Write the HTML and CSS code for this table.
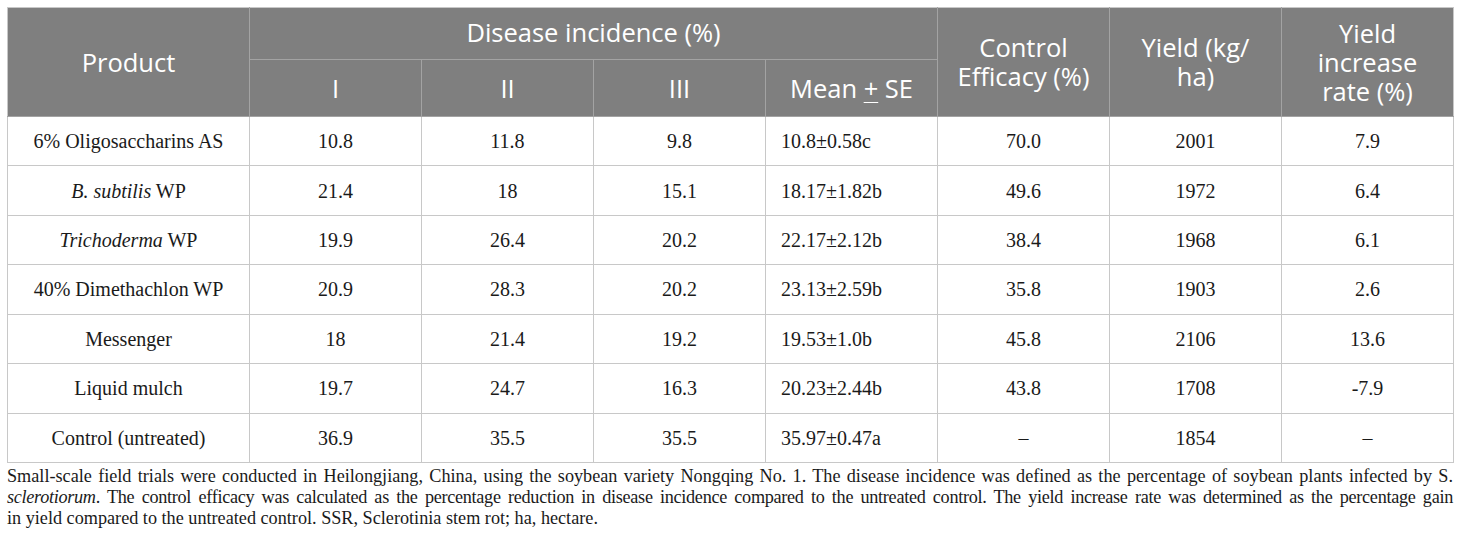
FILE: index.html
```html
<!DOCTYPE html>
<html lang="en">
<head>
<meta charset="utf-8">
<title>Table</title>
<link rel="stylesheet" href="styles.css">
</head>
<body>
<div class="wrap">
<table class="data">
  <colgroup>
    <col class="c-prod">
    <col class="c-num"><col class="c-num"><col class="c-num"><col class="c-num">
    <col class="c-num"><col class="c-num"><col class="c-num">
  </colgroup>
  <thead>
    <tr class="h1">
      <th rowspan="2">Product</th>
      <th colspan="4">Disease incidence (%)</th>
      <th rowspan="2">Control<br>Efficacy (%)</th>
      <th rowspan="2">Yield (kg/<br>ha)</th>
      <th rowspan="2">Yield<br>increase<br>rate (%)</th>
    </tr>
    <tr class="h2">
      <th>I</th>
      <th>II</th>
      <th>III</th>
      <th>Mean <u class="pm">+</u> SE</th>
    </tr>
  </thead>
  <tbody>
    <tr><td>6% Oligosaccharins AS</td><td>10.8</td><td>11.8</td><td>9.8</td><td class="mean">10.8±0.58c</td><td>70.0</td><td>2001</td><td>7.9</td></tr>
    <tr><td><i>B. subtilis</i> WP</td><td>21.4</td><td>18</td><td>15.1</td><td class="mean">18.17±1.82b</td><td>49.6</td><td>1972</td><td>6.4</td></tr>
    <tr><td><i>Trichoderma</i> WP</td><td>19.9</td><td>26.4</td><td>20.2</td><td class="mean">22.17±2.12b</td><td>38.4</td><td>1968</td><td>6.1</td></tr>
    <tr><td>40% Dimethachlon WP</td><td>20.9</td><td>28.3</td><td>20.2</td><td class="mean">23.13±2.59b</td><td>35.8</td><td>1903</td><td>2.6</td></tr>
    <tr><td>Messenger</td><td>18</td><td>21.4</td><td>19.2</td><td class="mean">19.53±1.0b</td><td>45.8</td><td>2106</td><td>13.6</td></tr>
    <tr><td>Liquid mulch</td><td>19.7</td><td>24.7</td><td>16.3</td><td class="mean">20.23±2.44b</td><td>43.8</td><td>1708</td><td>-7.9</td></tr>
    <tr><td>Control (untreated)</td><td>36.9</td><td>35.5</td><td>35.5</td><td class="mean">35.97±0.47a</td><td>–</td><td>1854</td><td>–</td></tr>
  </tbody>
</table>
<p class="note">
  <span class="line just">Small-scale field trials were conducted in Heilongjiang, China, using the soybean variety Nongqing No. 1. The disease incidence was defined as the percentage of soybean plants infected by S.</span>
  <span class="line just tight"><i>sclerotiorum</i>. The control efficacy was calculated as the percentage reduction in disease incidence compared to the untreated control. The yield increase rate was determined as the percentage gain</span>
  <span class="line">in yield compared to the untreated control. SSR, Sclerotinia stem rot; ha, hectare.</span>
</p>
</div>
</body>
</html>
```

FILE: styles.css
```css
html, body {
  margin: 0;
  padding: 0;
  background: #ffffff;
}

.wrap {
  padding: 7px 0 0 7px;
  width: 1446px;
}

.data {
  width: 1446px;
  table-layout: fixed;
  border-collapse: collapse;
  font-family: "Liberation Serif", "Times New Roman", serif;
  font-size: 20px;
  color: #1a1a1a;
}

.c-prod { width: 242px; }
.c-num { width: 172px; }

.data th {
  background: #7f7f7f;
  color: #ffffff;
  font-family: "Open Sans", "Noto Sans", sans-serif;
  font-weight: 400;
  font-size: 25.5px;
  line-height: 29px;
  text-align: center;
  vertical-align: middle;
  padding: 0 8px;
  border: 1px solid #a3a3a3;
}

.data thead tr:first-child th {
  border-top-color: #c8c8c8;
}
.data thead th:first-child {
  border-left-color: #c8c8c8;
}
.data thead tr:first-child th:last-child {
  border-right-color: #c8c8c8;
}

.h1 { height: 52px; }
.h2 { height: 57px; }

.h1 th[colspan] {
  padding-bottom: 2px;
}

.pm {
  text-decoration: underline;
  text-underline-offset: 4px;
  text-decoration-thickness: 1px;
}

.data td {
  height: 48.43px;
  padding: 0 15px;
  text-align: center;
  vertical-align: middle;
  border: 1px solid #c8c8c8;
  line-height: 24px;
  white-space: nowrap;
}

.data td.mean {
  text-align: left;
}

.note {
  margin: 3px 0 0 0;
  width: 1446px;
  font-family: "Liberation Serif", "Times New Roman", serif;
  font-size: 18.2px;
  line-height: 21px;
  color: #1a1a1a;
}

.line {
  display: block;
  white-space: nowrap;
}

.line.just {
  text-align: justify;
  text-align-last: justify;
}

.line.tight {
  letter-spacing: -0.3px;
}
```
